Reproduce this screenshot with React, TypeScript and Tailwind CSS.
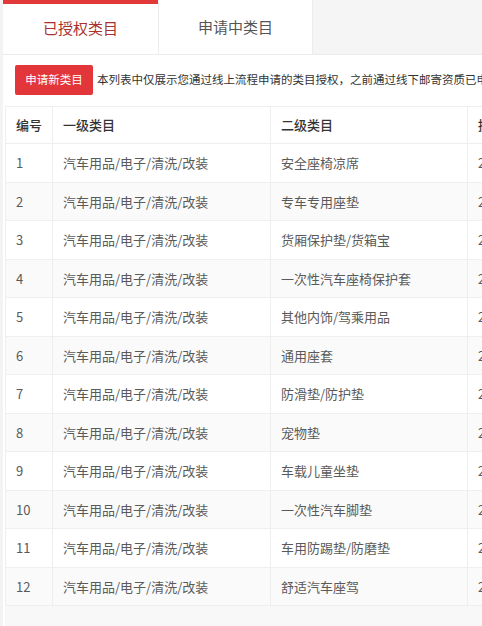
import React from 'react';

type CategoryRow = {
  id: number;
  first: string;
  second: string;
  time: string;
};

const secondNames = [
  '安全座椅凉席',
  '专车专用座垫',
  '货厢保护垫/货箱宝',
  '一次性汽车座椅保护套',
  '其他内饰/驾乘用品',
  '通用座套',
  '防滑垫/防护垫',
  '宠物垫',
  '车载儿童坐垫',
  '一次性汽车脚垫',
  '车用防踢垫/防磨垫',
  '舒适汽车座驾',
];

const rows: CategoryRow[] = secondNames.map((name, i) => ({
  id: i + 1,
  first: '汽车用品/电子/清洗/改装',
  second: name,
  time: '2019-03-12 10:22:10',
}));

const font = { fontFamily: '"Noto Sans CJK SC", "Noto Sans", sans-serif' };

const App = () => {
  return (
    <div className="w-[482px] h-[626px] overflow-hidden bg-[#f3f3f3] pl-[3px]" style={font}>
      <div className="flex flex-col h-full">
        <div className="flex flex-row h-[55px] bg-[#f5f5f5] border-b border-[#ececec]">
          <div className="w-[155px] bg-white border-t-4 border-[#e2393b] flex items-center justify-center">
            <span className="text-[15px] text-[#a8302e] -mt-[2px]">已授权类目</span>
          </div>
          <div className="w-[155px] bg-white border-l border-r border-[#ececec] flex items-center justify-center">
            <span className="text-[15px] text-[#555]">申请中类目</span>
          </div>
        </div>

        <div className="bg-white flex flex-row items-center pl-[12px] pt-[10px] pb-[11px] whitespace-nowrap">
          <button className="w-[78px] h-[30px] bg-[#e2363b] text-white text-[11.5px] rounded-[2px] shrink-0">
            申请新类目
          </button>
          <span className="ml-[4px] text-[11.5px] text-[#333]">
            本列表中仅展示您通过线上流程申请的类目授权，之前通过线下邮寄资质已申请的类目请联系小二查看
          </span>
        </div>

        <div className="bg-white pl-[2px]">
          <table className="table-fixed border-collapse border-l border-[#eeeeee] w-[640px]">
            <colgroup>
              <col className="w-[47px]" />
              <col className="w-[218px]" />
              <col className="w-[197px]" />
              <col className="w-[178px]" />
            </colgroup>
            <thead>
              <tr className="h-[37px] border-t border-b border-[#eeeeee]">
                <th className="text-left font-medium text-[13px] text-[#333] pl-[10px]">编号</th>
                <th className="text-left font-medium text-[13px] text-[#333] pl-[10px] border-l border-[#eeeeee]">一级类目</th>
                <th className="text-left font-medium text-[13px] text-[#333] pl-[10px] border-l border-[#eeeeee]">二级类目</th>
                <th className="text-left font-medium text-[13px] text-[#333] pl-[10px] border-l border-[#eeeeee] whitespace-nowrap">授权时间</th>
              </tr>
            </thead>
            <tbody>
              {rows.map((row) => (
                <tr
                  key={row.id}
                  className={row.id % 2 === 0 ? 'h-[38.5px] bg-[#fafafa] border-b border-[#efefef]' : 'h-[38.5px] bg-white border-b border-[#efefef]'}
                >
                  <td className="text-[13px] text-[#5a5a5a] pl-[10px]">{row.id}</td>
                  <td className="text-[13px] text-[#5a5a5a] pl-[10px] border-l border-[#eeeeee] whitespace-nowrap">{row.first}</td>
                  <td className="text-[13px] text-[#5a5a5a] pl-[10px] border-l border-[#eeeeee] whitespace-nowrap">{row.second}</td>
                  <td className="text-[13px] text-[#5a5a5a] pl-[10px] border-l border-[#eeeeee] whitespace-nowrap">{row.time}</td>
                </tr>
              ))}
            </tbody>
          </table>
        </div>

        <div className="flex-1 bg-[#f8f8f8] border-l-[2px] border-white" />
      </div>
    </div>
  );
};

export default App;
